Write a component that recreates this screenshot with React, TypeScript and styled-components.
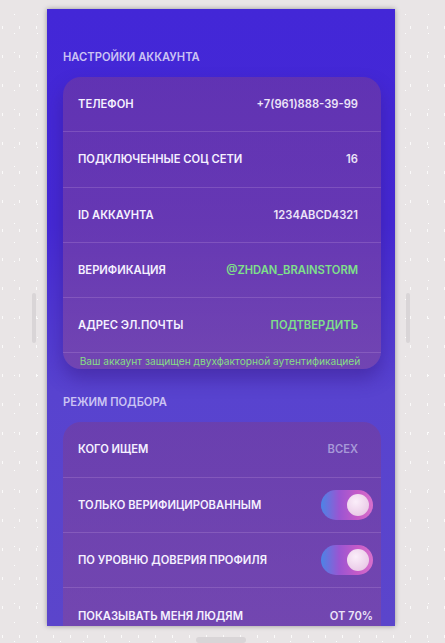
import React from "react";
import styled, { createGlobalStyle } from "styled-components";

const Global = createGlobalStyle`
  html, body { margin: 0; padding: 0; }
  body {
    width: 445px;
    height: 643px;
    overflow: hidden;
    background-color: #e9e5e6;
    background-image:
      radial-gradient(rgba(255,255,255,0.95) 0.7px, transparent 1px),
      radial-gradient(rgba(255,255,255,0.8) 0.6px, transparent 0.9px);
    background-size: 23px 19px, 17px 29px;
    background-position: 3px 5px, 11px 13px;
    font-family: Inter, "Noto Sans", "Liberation Sans", sans-serif;
    -webkit-font-smoothing: antialiased;
  }
`;

const Page = styled.div`
  display: flex;
  flex-direction: column;
  align-items: center;
  gap: 11px;
  width: 378px;
  padding: 9px 0 0 32px;
`;

const Stage = styled.div`
  display: flex;
  align-items: center;
  gap: 11px;
`;

const SideBar = styled.div`
  width: 4px;
  height: 50px;
  border-radius: 2px;
  background: #d9d5d7;
`;

const BottomBar = styled.div`
  width: 50px;
  height: 6px;
  border-radius: 3px;
  background: #d9d5d7;
`;

const Screen = styled.div`
  width: 348px;
  height: 617px;
  box-sizing: border-box;
  padding: 41px 14px 0 16px;
  overflow: hidden;
  display: flex;
  flex-direction: column;
  background: linear-gradient(180deg, #4327d7 0%, #4529d5 35%, #5843cf 62%, #5b45cb 100%);
  box-shadow: 0 0 5px rgba(0, 0, 0, 0.35);
`;

const SectionTitle = styled.div<{ $top?: number }>`
  font-size: 11.2px;
  line-height: 14px;
  font-weight: 600;
  color: #cbc3f3;
  text-transform: uppercase;
  margin-top: ${(p) => p.$top ?? 0}px;
  margin-bottom: 13px;
`;

const Card = styled.div<{ $glow?: boolean }>`
  border-radius: 18px;
  background: linear-gradient(180deg, rgba(120, 60, 150, 0.55) 0%, rgba(130, 72, 160, 0.62) 100%);
  box-shadow: ${(p) => (p.$glow ? "0 10px 18px rgba(55, 25, 130, 0.45)" : "none")};
  display: flex;
  flex-direction: column;
  flex-shrink: 0;
`;

const Row = styled.div<{ $last?: boolean }>`
  height: 55.25px;
  box-sizing: border-box;
  display: flex;
  align-items: center;
  justify-content: space-between;
  padding: 0 8px 0 15px;
  border-bottom: ${(p) => (p.$last ? "none" : "1px solid rgba(190, 150, 220, 0.28)")};
`;

const Label = styled.span`
  font-size: 11.2px;
  font-weight: 600;
  color: #f5f1ff;
  text-transform: uppercase;
  white-space: nowrap;
`;

const Value = styled.span<{ $tone?: "light" | "green" | "muted"; $flush?: boolean }>`
  font-size: 11.2px;
  font-weight: 600;
  white-space: nowrap;
  margin-right: ${(p) => (p.$flush ? 0 : 15)}px;
  color: ${(p) =>
    p.$tone === "green" ? "#7fe08a" : p.$tone === "muted" ? "#a798d8" : "#ece4f8"};
`;

const Note = styled.div`
  font-size: 10.2px;
  line-height: 14px;
  color: #86de84;
  text-align: center;
  padding: 1px 4px 0 0;
  height: 15px;
`;

const Track = styled.div`
  width: 52px;
  height: 30px;
  border-radius: 15px;
  box-sizing: border-box;
  padding: 4px;
  display: flex;
  justify-content: flex-end;
  align-items: center;
  background: linear-gradient(90deg, #4b84e6 0%, #9a55d2 35%, #c55ac8 70%, #d870cc 100%);
`;

const Knob = styled.div`
  width: 22px;
  height: 22px;
  border-radius: 50%;
  background: radial-gradient(circle at 40% 35%, #fbeefa 0%, #ebcde8 70%, #d9b3d8 100%);
`;

const Toggle = () => (
  <Track>
    <Knob />
  </Track>
);

export default function App() {
  return (
    <>
      <Global />
      <Page>
        <Stage>
          <SideBar />
          <Screen>
            <SectionTitle>Настройки аккаунта</SectionTitle>
            <Card $glow>
              <Row>
                <Label>Телефон</Label>
                <Value>+7(961)888-39-99</Value>
              </Row>
              <Row>
                <Label>Подключенные соц сети</Label>
                <Value>16</Value>
              </Row>
              <Row>
                <Label>ID аккаунта</Label>
                <Value>1234ABCD4321</Value>
              </Row>
              <Row>
                <Label>Верификация</Label>
                <Value $tone="green">@ZHDAN_BRAINSTORM</Value>
              </Row>
              <Row>
                <Label>Адрес эл.почты</Label>
                <Value $tone="green">ПОДТВЕРДИТЬ</Value>
              </Row>
              <Note>Ваш аккаунт защищен двухфакторной аутентификацией</Note>
            </Card>
            <SectionTitle $top={26}>Режим подбора</SectionTitle>
            <Card>
              <Row>
                <Label>Кого ищем</Label>
                <Value $tone="muted">ВСЕХ</Value>
              </Row>
              <Row>
                <Label>Только верифицированным</Label>
                <Toggle />
              </Row>
              <Row>
                <Label>По уровню доверия профиля</Label>
                <Toggle />
              </Row>
              <Row $last>
                <Label>Показывать меня людям</Label>
                <Value $flush>ОТ 70%</Value>
              </Row>
            </Card>
          </Screen>
          <SideBar />
        </Stage>
        <BottomBar />
      </Page>
    </>
  );
}
